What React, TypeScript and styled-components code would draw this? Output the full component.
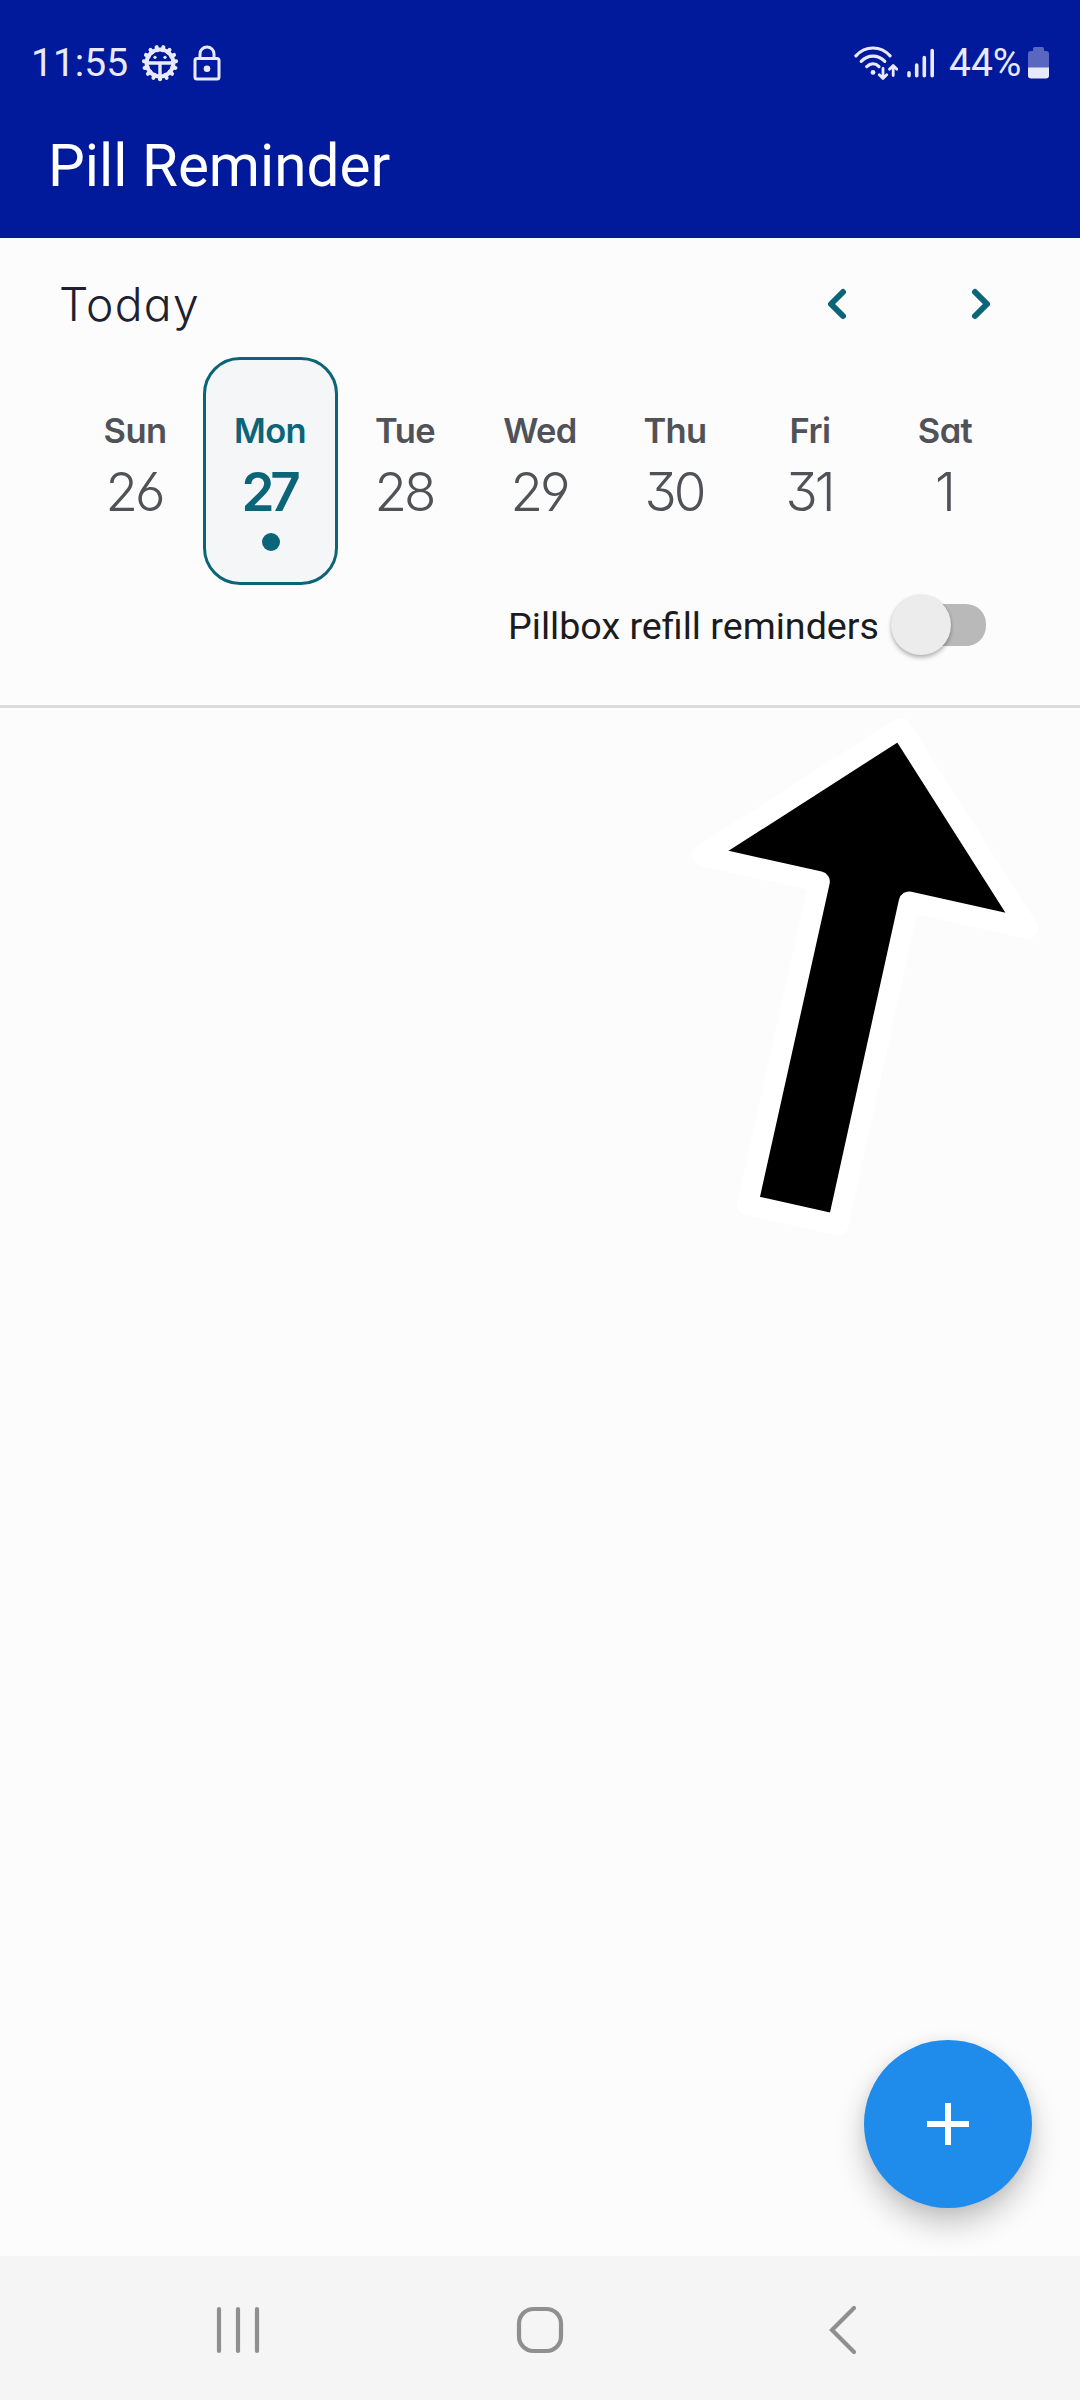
import React from "react";
import styled, { createGlobalStyle } from "styled-components";

const GlobalStyle = createGlobalStyle`
  *, *::before, *::after { box-sizing: border-box; }
  body { margin: 0; background: #fcfcfc; }
`;

const TEAL = "#0c6478";
const INK = "#e8eafc";

const Screen = styled.main`
  position: relative;
  display: flex;
  flex-direction: column;
  width: 1080px;
  height: 2400px;
  overflow: hidden;
  background: #fcfcfc;
  font-family: Roboto, "Liberation Sans", sans-serif;
`;

const Header = styled.header`
  height: 238px;
  flex: none;
  background: #001a9b;
`;

const StatusBar = styled.div`
  display: flex;
  justify-content: space-between;
  height: 124px;
  padding: 0 30px 0 31px;
  color: ${INK};
`;

const StatusGroup = styled.div`
  display: flex;
  align-items: center;
  height: 125px;
`;

const StatusText = styled.span<{ $width: number; $gap?: number }>`
  width: ${(p) => p.$width}px;
  margin-left: ${(p) => p.$gap ?? 0}px;
  font-size: 39px;
  line-height: 44px;
  white-space: nowrap;
`;

const StatusIcon = styled.svg<{ $gap?: number }>`
  display: block;
  flex: none;
  margin-left: ${(p) => p.$gap ?? 0}px;
`;

const Title = styled.h1`
  margin: 0;
  padding-left: 48px;
  font-size: 58.4px;
  font-weight: 400;
  line-height: 84px;
  color: #fff;
  white-space: nowrap;
`;

const Calendar = styled.section`
  height: 470px;
  flex: none;
  border-bottom: 3px solid #dcdcdc;
  font-family: Inter, "Open Sans", sans-serif;
  font-feature-settings: "cv11", "cv09", "cv03", "cv04";
`;

const MonthRow = styled.div`
  display: flex;
  align-items: center;
  height: 119px;
  padding: 0 87px 0 59px;
`;

const MonthLabel = styled.h2`
  flex: 1;
  margin: 0;
  padding-top: 13px;
  font-size: 46.2px;
  font-weight: 300;
  line-height: 56px;
  letter-spacing: 1.3px;
  color: #202030;
`;

const StepButton = styled.button`
  display: flex;
  margin: 13px 0 0 120px;
  padding: 0;
  border: 0;
  background: none;
`;

const Week = styled.div`
  display: grid;
  grid-template-columns: repeat(7, 135px);
  justify-content: center;
  height: 228px;
`;

const Day = styled.div<{ $active: boolean }>`
  display: flex;
  flex-direction: column;
  align-items: center;
  padding-top: 49px;
  border: 3px solid ${(p) => (p.$active ? TEAL : "transparent")};
  border-radius: 37px;
  background: ${(p) => (p.$active ? "#f4f6f8" : "transparent")};
  color: ${(p) => (p.$active ? TEAL : "#505258")};
`;

const DayName = styled.span`
  font-size: 34.5px;
  font-weight: 590;
  line-height: 44px;
  letter-spacing: -0.6px;
`;

const DayNumber = styled.span<{ $active: boolean }>`
  margin-top: 11px;
  font-size: 53px;
  font-weight: ${(p) => (p.$active ? 600 : 300)};
  line-height: 57px;
  letter-spacing: ${(p) => (p.$active ? -4.2 : -3)}px;
  transform: translateX(-1px);
`;

const Dot = styled.span`
  width: 18px;
  height: 18px;
  margin: 12px 0 0 1px;
  border-radius: 50%;
  background: ${TEAL};
`;

const RefillRow = styled.label`
  display: flex;
  justify-content: flex-end;
  align-items: center;
  height: 82px;
  padding-right: 94px;
  font-family: Roboto, "Liberation Sans", sans-serif;
  font-size: 37.65px;
  line-height: 44px;
  color: #1b1b20;
  white-space: nowrap;
`;

const Track = styled.span`
  display: flex;
  align-items: center;
  width: 82px;
  height: 42px;
  margin: 0 0 2px 25px;
  border-radius: 20px;
  background: #b9b9b9;
`;

const Thumb = styled.span`
  flex: none;
  width: 60px;
  height: 60px;
  margin-left: -13px;
  border-radius: 50%;
  background: #ececec;
  box-shadow: 0 3px 4px rgba(0, 0, 0, 0.26), 0 0 3px rgba(0, 0, 0, 0.1);
`;

const Content = styled.section`
  flex: 1;
`;

const Pointer = styled.svg`
  position: absolute;
  left: 680px;
  top: 708px;
`;

const AddButton = styled.button`
  position: absolute;
  right: 48px;
  top: 2040px;
  display: flex;
  align-items: center;
  justify-content: center;
  width: 168px;
  height: 168px;
  padding: 0;
  border: 0;
  border-radius: 50%;
  background: #1f8ceb;
  box-shadow: 0 16px 30px rgba(0, 0, 0, 0.22), 0 2px 14px rgba(0, 0, 0, 0.07);
`;

const NavBar = styled.nav`
  position: relative;
  display: grid;
  grid-template-columns: repeat(3, 303px);
  justify-content: center;
  align-items: center;
  justify-items: center;
  height: 144px;
  padding-top: 4px;
  flex: none;
  background: #f5f5f5;
`;

const NavIcon = styled.svg`
  display: block;
  fill: none;
  stroke: #8f8f8f;
  stroke-width: 4.2px;
  stroke-linecap: round;
`;

const DAYS: [string, number][] = [
  ["Sun", 26],
  ["Mon", 27],
  ["Tue", 28],
  ["Wed", 29],
  ["Thu", 30],
  ["Fri", 31],
  ["Sat", 1],
];

const TEETH = Array.from({ length: 15 }, (_, i) => i * 24 + 12);

function BugIcon() {
  return (
    <StatusIcon width="38" height="38" viewBox="-19 -19 38 38" $gap={2}>
      <g stroke={INK} strokeWidth="4" strokeLinecap="round">
        {TEETH.map((a) => (
          <line key={a} x1="0" y1="-13" x2="0" y2="-16.2" transform={`rotate(${a})`} />
        ))}
      </g>
      <circle r="13.4" fill="none" stroke={INK} strokeWidth="4" />
      <path d="M-12.5 0H12.5M0 0V13" stroke={INK} strokeWidth="3.4" />
      <circle cx="-5" cy="-5.7" r="1.6" fill={INK} />
      <circle cx="5" cy="-5.7" r="1.6" fill={INK} />
    </StatusIcon>
  );
}

function LockIcon() {
  return (
    <StatusIcon width="28" height="36" viewBox="0 0 28 36" $gap={14}>
      <rect x="2" y="13.5" width="24" height="20.5" rx="2" fill="none" stroke={INK} strokeWidth="3" />
      <path d="M7 13V9a7 7 0 0 1 14 0v4" fill="none" stroke={INK} strokeWidth="3" />
      <circle cx="14" cy="23.7" r="3.3" fill={INK} />
    </StatusIcon>
  );
}

function WifiIcon() {
  return (
    <StatusIcon width="44" height="34" viewBox="0 0 44 34">
      <g fill="none" stroke={INK} strokeWidth="3.2" strokeLinecap="round" strokeLinejoin="round">
        <path d="M1.9 9.8C11.5 -0.6 26.5 -0.6 36.1 9.8" />
        <path d="M7.2 15.4C13.8 8.4 24.2 8.4 30.8 15.4" />
        <path d="M12.7 20.6C16.5 17 21.5 17 25 20.6" />
        <path d="M29 22.5V32M25.3 28.7L29 32.4L32.7 28.7" strokeWidth="2.8" />
        <path d="M39.2 29.5V20M35.5 23.2L39.2 19.5L42.9 23.2" strokeWidth="2.8" />
      </g>
      <circle cx="19" cy="26.4" r="2.4" fill={INK} />
    </StatusIcon>
  );
}

function SignalIcon() {
  return (
    <StatusIcon width="28" height="32" viewBox="0 0 28 32" $gap={9}>
      <g stroke={INK} strokeWidth="3.6" strokeLinecap="round">
        <path d="M2 25.8V28.8M9.7 18V28.8M17.3 10.5V28.8M25.2 3.5V28.8" />
      </g>
    </StatusIcon>
  );
}

function BatteryIcon() {
  return (
    <StatusIcon width="22" height="32" viewBox="0 0 22 32">
      <path
        d="M6.5 0H14.5Q16 0 16 1.5V4H18Q21 4 21 7V21H0V7Q0 4 3 4H5V1.5Q5 0 6.5 0Z"
        fill="#5967c1"
      />
      <path d="M0 20.5H21V28.5Q21 31.5 18 31.5H3Q0 31.5 0 28.5Z" fill={INK} />
    </StatusIcon>
  );
}

function Chevron({ d }: { d: string }) {
  return (
    <svg width="24" height="36" viewBox="0 0 24 36">
      <path d={d} fill="none" stroke={TEAL} strokeWidth="6" strokeLinecap="round" strokeLinejoin="round" />
    </svg>
  );
}

export default function App() {
  return (
    <Screen>
      <GlobalStyle />
      <Header>
        <StatusBar>
          <StatusGroup>
            <StatusText $width={108}>11:55</StatusText>
            <BugIcon />
            <LockIcon />
          </StatusGroup>
          <StatusGroup>
            <WifiIcon />
            <SignalIcon />
            <StatusText $width={79} $gap={14}>44%</StatusText>
            <BatteryIcon />
          </StatusGroup>
        </StatusBar>
        <Title>Pill Reminder</Title>
      </Header>

      <Calendar>
        <MonthRow>
          <MonthLabel>Today</MonthLabel>
          <StepButton aria-label="Previous week">
            <Chevron d="M18 6L6 18L18 30" />
          </StepButton>
          <StepButton aria-label="Next week">
            <Chevron d="M6 6L18 18L6 30" />
          </StepButton>
        </MonthRow>
        <Week>
          {DAYS.map(([name, date]) => {
            const active = date === 27;
            return (
              <Day key={name} $active={active}>
                <DayName>{name}</DayName>
                <DayNumber $active={active}>{date}</DayNumber>
                {active && <Dot />}
              </Day>
            );
          })}
        </Week>
        <RefillRow>
          Pillbox refill reminders
          <Track>
            <Thumb />
          </Track>
        </RefillRow>
      </Calendar>

      <Content />

      <Pointer width="380" height="540" viewBox="680 708 380 540">
        <path
          d="M900.5 728.2L1027.7 928.3L909.1 901.9L837.9 1224.9L747.6 1204.7L819.4 881.7L702 855.5Z"
          fill="#000"
          stroke="#fff"
          strokeWidth="20.8"
          strokeLinejoin="round"
        />
      </Pointer>

      <AddButton aria-label="Add reminder">
        <svg width="42" height="42" viewBox="0 0 42 42">
          <path d="M21 0V42M0 21H42" stroke="#fff" strokeWidth="6" />
        </svg>
      </AddButton>

      <NavBar>
        <NavIcon width="48" height="50" viewBox="0 0 48 50">
          <path d="M6 4V46M25 4V46M44 4V46" />
        </NavIcon>
        <NavIcon width="50" height="50" viewBox="0 0 50 50">
          <rect x="4" y="4" width="42" height="42" rx="14.5" />
        </NavIcon>
        <NavIcon width="30" height="52" viewBox="0 0 30 52">
          <path d="M26 4L4 26L26 48" />
        </NavIcon>
      </NavBar>
    </Screen>
  );
}
